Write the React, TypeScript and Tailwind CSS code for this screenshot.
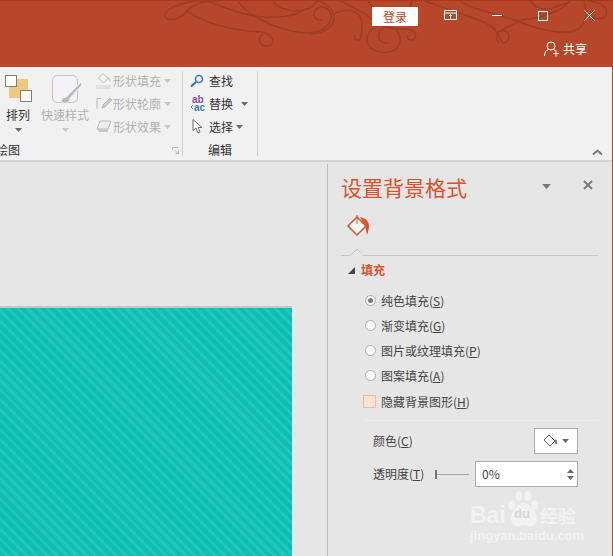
import React from "react";

function Caret({ className = "", color = "#6a6a6a" }: { className?: string; color?: string }) {
  return (
    <svg width="7" height="4" viewBox="0 0 7 4" className={className}>
      <path d="M0 0h7L3.5 4z" fill={color} />
    </svg>
  );
}

function Ornament() {
  return (
    <svg width="613" height="67" viewBox="0 0 613 67" fill="none" stroke="#9f3d25" strokeWidth="1.5" className="absolute left-0 top-0">
      <path d="M212 0c-22-2-46 6-47 14 1 7 14 6 22-4 6-7 16-10 30-10" />
      <path d="M186 9c16 12 42 20 74 22 12 1 18 12 8 14-8 1-12-8-5-12" />
      <path d="M238 0c8 12 24 22 50 29 22 6 36 2 42-8 5-9-4-18-12-14-7 4-4 13 4 12" />
      <path d="M205 0c12 3 22 8 36 12 20 6 52 6 62-3" />
      <path d="M273 0c4 6 14 10 24 10 8 0 16-4 20-10" />
      <path d="M310 33c14 0 25-8 24-18-1-7-8-14-18-15" />
      <path d="M333 14c8-6 20-6 26 0 6 8 2 18 2 22-2 6-8 2-6-2" />
      <path d="M340 0c14 6 26 12 34 20 8 8 22 8 32 8 8 0 12 6 8 10-4 3-8-1-6-4" />
      <path d="M387 23c-14 0-21 10-20 18 2 8 14 12 22 10 10-2 14-12 9-20-5-7-17-6-19 1-2 6 3 11 9 10" />
      <path d="M368 0c4 8 12 14 20 16 10 3 20-2 24-16" />
      <path d="M425 0c16 6 36 12 56 20 22 8 18 24 23 22 6-2 7-10 1-12-9-2-10 8-6 12" />
      <path d="M460 0c10 8 34 12 52 18 20 8 42 15 58 13 16-2 18-18 14-31" />
      <path d="M570 0c-10 12-34 18-44 18-10 2-24 12-30 14" />
      <path d="M590 0c14 2 18 8 16 14-3 6-12 4-14 0" />
      <path d="M530 0c6 8 16 10 26 6 8-3 12-4 14-6" />
    </svg>
  );
}

function ShapeRow({ label, icon }: { label: string; icon: React.ReactNode }) {
  return (
    <div className="flex h-[23px] items-center">
      <span className="flex w-[19px] justify-center">{icon}</span>
      <span className="text-[12px] text-[#b1b1b1]">{label}</span>
      <Caret className="ml-[3px]" color="#c8c8c8" />
    </div>
  );
}

function Radio({ label, k, checked }: { label: string; k: string; checked?: boolean }) {
  return (
    <div className="flex h-[25px] items-center">
      <span className="flex h-[11px] w-[11px] items-center justify-center rounded-full border border-[#ababab] bg-white">
        {checked && <span className="h-[5px] w-[5px] rounded-full bg-[#7a7a7a]" />}
      </span>
      <span className="ml-[5px] text-[12px] text-[#444]">
        {label}(<span className="underline">{k}</span>)
      </span>
    </div>
  );
}

export default function App() {
  return (
    <div
      className="relative flex h-[556px] w-[613px] flex-col overflow-hidden border-r border-[#b7472a] bg-[#e6e6e6]"
      style={{ fontFamily: '"Noto Sans CJK SC", "Liberation Sans", sans-serif' }}
    >
      {/* title bar */}
      <header className="relative h-[67px] shrink-0 border-t border-[#ab3a1d] bg-[#b7472a]">
        <Ornament />
        <div className="relative flex h-[25px] items-end pl-[372px]">
          <div className="flex h-[19px] w-[46px] items-center justify-center bg-white text-[12px] text-[#b7472a]">登录</div>
          <svg width="14" height="11" viewBox="0 0 14 11" className="mb-[5px] ml-[26px]" fill="none" stroke="#fff">
            <path d="M.5.5h12v9H.5zM.5 3h12M6.5 9V5M5 6l1.500-1.500L8 6" />
          </svg>
          <span className="mb-[10px] ml-[34px] h-px w-[10px] bg-white" />
          <span className="mb-[5px] ml-[36px] h-[10px] w-[10px] border border-white" />
          <svg width="11" height="11" viewBox="0 0 11 11" className="mb-[5px] ml-[36px]" stroke="#fff" fill="none">
            <path d="M.5.5l10 10M10.500.5l-10 10" />
          </svg>
        </div>
        <div className="relative mt-[14px] flex items-center pl-[544px] text-[12px] text-white">
          <svg width="16" height="16" viewBox="0 0 16 16" fill="none" stroke="#fff">
            <circle cx="7" cy="5" r="4" />
            <path d="M.5 15c0-4 2-6 4-6.500M9.500 8.500c1 .4 1.700 1 2 1.500M9 12.500h6M12 9.500v6" />
          </svg>
          <span className="ml-[3px]">共享</span>
        </div>
      </header>

      {/* ribbon */}
      <section className="relative flex h-[95px] shrink-0 border-b-2 border-[#d4d4d4] bg-[#f1f1f1] pt-[4px]">
        {/* drawing group */}
        <div className="flex h-[85px] w-[183px] shrink-0 flex-col border-r border-[#d2d2d2]">
          <div className="flex h-[70px] shrink-0">
            <div className="flex w-[36px] flex-col items-center">
              <svg width="28" height="28" viewBox="0 0 28 28" className="ml-[1px] mt-[4px]">
                <rect x="4" y="4" width="19" height="19" fill="#efc77f" />
                <rect x=".5" y=".5" width="11" height="11" fill="#fff" stroke="#7d7d7d" />
                <rect x="15.500" y="15.500" width="11" height="11" fill="#fff" stroke="#7d7d7d" />
              </svg>
              <span className="mt-[4px] text-[12px] leading-[16px] text-[#333]">排列</span>
              <Caret className="mt-[5px]" />
            </div>
            <div className="flex w-[58px] flex-col items-center">
              <svg width="30" height="30" viewBox="0 0 30 30" className="ml-[3px] mt-[4px]" fill="none">
                <rect x=".5" y=".5" width="25" height="27" rx="5" fill="#f4f2f6" stroke="#c4c4c4" />
                <path d="M29 7L17 19l-3 3-3 1c-2 .5-2 4 0 5 3 1 7-1 7-4l1-2L30 10z" fill="#bdbdbd" stroke="#f1f1f1" />
              </svg>
              <span className="mt-[2px] text-[12px] leading-[16px] text-[#b1b1b1]">快速样式</span>
              <Caret className="mt-[5px]" color="#c8c8c8" />
            </div>
            <div className="-mt-[2px] flex w-[88px] flex-col">
              <ShapeRow
                label="形状填充"
                icon={
                  <svg width="17" height="16" viewBox="0 0 17 16" fill="none">
                    <path d="M8 .5l5 5-4.500 4.500-5-5z" stroke="#b9b9b9" fill="#f7f7f7" />
                    <path d="M13 5c2 .5 2 2 1.500 3.500" stroke="#b9b9b9" />
                    <rect x="1" y="12" width="15" height="4" fill="#e0e0e0" />
                  </svg>
                }
              />
              <ShapeRow
                label="形状轮廓"
                icon={
                  <svg width="16" height="14" viewBox="0 0 16 14" fill="none" stroke="#b9b9b9">
                    <path d="M5 1.500H1v10" />
                    <path d="M14 1l2 2-7 7-3 1 1-3z" fill="#cfcfcf" />
                  </svg>
                }
              />
              <ShapeRow
                label="形状效果"
                icon={
                  <svg width="16" height="13" viewBox="0 0 16 13">
                    <path d="M4 1h11l-3 8H1z" fill="#ececec" stroke="#bdbdbd" />
                    <path d="M1 9h11v3H3z" fill="#c9c9c9" />
                  </svg>
                }
              />
            </div>
          </div>
          <div className="relative -ml-[4px] flex h-[18px] shrink-0 items-center text-[12px] text-[#333]">
            绘图
            <svg width="7" height="7" viewBox="0 0 7 7" className="absolute right-[3px] top-[6px]" fill="none" stroke="#b5b5b5">
              <path d="M.5 3V.5H6M3 3.500L6 6.500M6.500 3.500v3h-3" />
            </svg>
          </div>
        </div>

        {/* editing group */}
        <div className="flex h-[85px] w-[75px] shrink-0 flex-col border-r border-[#d2d2d2]">
          <div className="-mt-[2px] flex h-[72px] shrink-0 flex-col pl-[7px]">
            <div className="flex h-[23px] items-center text-[12px] text-[#333]">
              <svg width="14" height="14" viewBox="0 0 14 14" fill="none" className="mr-[5px]">
                <circle cx="9" cy="5" r="3.500" stroke="#3f78b5" strokeWidth="1.600" />
                <path d="M6 8l-5 4.500" stroke="#2f6aa8" strokeWidth="2" />
              </svg>
              查找
            </div>
            <div className="flex h-[23px] items-center text-[12px] text-[#333]">
              <svg width="17" height="20" viewBox="0 0 17 20" className="mr-[2px]" style={{ fontFamily: '"Liberation Sans", sans-serif' }}>
                <text x="2" y="9" fontSize="10" fontWeight="700" fill="#8a4fa8">ab</text>
                <text x="4" y="17" fontSize="10" fontWeight="700" fill="#3f78b5">ac</text>
                <path d="M3 11l-2 2 2 2" fill="none" stroke="#3f78b5" />
              </svg>
              替换
              <Caret className="ml-[8px]" />
            </div>
            <div className="flex h-[23px] items-center text-[12px] text-[#333]">
              <svg width="11" height="15" viewBox="0 0 11 15" fill="#fff" stroke="#6d6d6d" className="ml-[2px] mr-[6px]">
                <path d="M1 .5v11l3-2.500 2 5 2-1-2-4.500h4z" />
              </svg>
              选择
              <Caret className="ml-[3px]" />
            </div>
          </div>
          <div className="flex h-[18px] shrink-0 items-center justify-center text-[12px] text-[#333]">编辑</div>
        </div>

        <svg width="11" height="6" viewBox="0 0 11 6" className="absolute bottom-[5px] right-[9px]" fill="none" stroke="#777" strokeWidth="2">
          <path d="M1 5.500l4.500-4 4.500 4" />
        </svg>
      </section>

      {/* body */}
      <main className="flex min-h-0 flex-1">
        <div className="flex w-[327px] shrink-0 flex-col justify-end">
          <div className="h-[250px] w-[292px] border-t-2 border-[#c6c6c6] bg-[repeating-linear-gradient(45deg,#10bfb4_0,#10bfb4_4px,#22c6bb_4px,#22c6bb_7px)]" />
        </div>

        <aside className="relative mt-[2px] flex-1 border-l border-[#bdbdbd] pl-[13px] pr-[14px]">
          <div className="flex h-[47px] items-start pt-[8px]">
            <h1 className="flex-1 text-[21px] leading-[30px] text-[#d9522c]">设置背景格式</h1>
            <Caret className="mr-[32px] mt-[12px] h-[5px] w-[9px]" color="#7a7a7a" />
            <svg width="10" height="10" viewBox="0 0 10 10" className="mr-[5px] mt-[8px]" stroke="#7a7a7a" strokeWidth="2" fill="none">
              <path d="M1 1l8 8M9 1L1 9" />
            </svg>
          </div>

          <div className="flex h-[30px] items-center pl-[5px]">
            <svg width="24" height="24" viewBox="0 0 24 24" fill="none">
              <path d="M11 3l9 9-9 9-9-9z" fill="#fff" stroke="#d9522c" strokeWidth="1.500" />
              <path d="M11 1v9" stroke="#d9522c" />
              <path d="M14 3c5 1 9 4 9 9 0 3-1 6-2 9-1-4-1-6-2-9z" fill="#d9522c" />
            </svg>
          </div>

          <div className="relative mt-[6px] h-[9px] border-b border-[#c8c8c8]">
            <svg width="14" height="8" viewBox="0 0 14 8" className="absolute -bottom-px left-[9px]" fill="#e6e6e6" stroke="#c8c8c8">
              <path d="M0 8l7-7 7 7" />
            </svg>
          </div>

          <div className="flex h-[28px] items-center pl-[7px]">
            <svg width="7" height="7" viewBox="0 0 7 7" className="mr-[6px]">
              <path d="M7 0v7H0z" fill="#444" />
            </svg>
            <span className="text-[12px] font-bold text-[#d9522c]">填充</span>
          </div>

          <div className="pl-[24px] pt-[4px]">
            <Radio label="纯色填充" k="S" checked />
            <Radio label="渐变填充" k="G" />
            <Radio label="图片或纹理填充" k="P" />
            <Radio label="图案填充" k="A" />
          </div>

          <div className="ml-[22px] mt-[1px] flex h-[25px] items-center">
            <span className="h-[13px] w-[13px] border border-[#f2b9a4] bg-[#fde0d6]" />
            <span className="ml-[5px] text-[12px] text-[#444]">
              隐藏背景图形(<span className="underline">H</span>)
            </span>
          </div>

          <div className="ml-[22px] mt-[6px] border-t border-[#ececec] pl-[10px]">
            <div className="mt-[7px] flex h-[26px] w-[205px] items-center justify-between">
              <span className="text-[12px] text-[#444]">
                颜色(<span className="underline">C</span>)
              </span>
              <div className="flex h-[26px] w-[44px] items-center justify-center border border-[#ababab] bg-white">
                <svg width="15" height="14" viewBox="0 0 15 14" fill="none">
                  <path d="M6 1l6 6-5 5-6-6z" fill="#fff" stroke="#666" />
                  <path d="M12 6c2 0 2 2 1 4l-1-3z" fill="#3f78b5" stroke="#3f78b5" />
                </svg>
                <Caret className="ml-[4px]" />
              </div>
            </div>
            <div className="mt-[7px] flex h-[26px] w-[205px] items-center">
              <span className="shrink-0 whitespace-nowrap text-[12px] text-[#444]">
                透明度(<span className="underline">T</span>)
              </span>
              <div className="ml-[11px] flex min-w-0 flex-1 items-center">
                <span className="h-[9px] w-[2px] bg-[#777]" />
                <span className="h-px flex-1 bg-[#a5a5a5]" />
              </div>
              <div className="ml-[6px] flex h-[26px] w-[103px] shrink-0 items-center justify-between border border-[#ababab] bg-white pl-[6px] pr-[3px]">
                <span className="text-[12px] text-[#444]">0%</span>
                <span className="flex flex-col gap-[3px]">
                  <svg width="7" height="4" viewBox="0 0 7 4">
                    <path d="M0 4h7L3.500 0z" fill="#6a6a6a" />
                  </svg>
                  <Caret />
                </span>
              </div>
            </div>
          </div>
        </aside>
      </main>

      {/* watermark */}
      <div className="pointer-events-none absolute left-[470px] top-[490px] flex w-[112px] flex-col text-white opacity-50">
        <div className="flex h-[37px] items-end" style={{ fontFamily: '"Liberation Sans", sans-serif' }}>
          <span className="w-[37px] text-[23px] font-bold leading-[24px]">Bai</span>
          <span className="relative h-[37px] w-[33px]">
            <svg width="33" height="37" viewBox="0 0 33 37" fill="#fff">
              <ellipse cx="5" cy="15" rx="3.500" ry="5" />
              <ellipse cx="12" cy="6" rx="3.500" ry="5" />
              <ellipse cx="21" cy="6" rx="3.500" ry="5" />
              <ellipse cx="28" cy="15" rx="3.500" ry="5" />
              <path d="M17 13c5 0 13 8 13 15 0 9-7 9-13 7-6 2-13 2-13-7 0-7 8-15 13-15z" />
            </svg>
            <span className="absolute bottom-[6px] left-[7px] text-[13px] font-bold leading-[14px] text-[#c8c8c8]">du</span>
          </span>
          <span className="text-[18px] font-bold leading-[24px]" style={{ fontFamily: '"Noto Sans CJK SC", sans-serif' }}>经验</span>
        </div>
        <span className="mt-[1px] text-[13px] font-bold leading-[16px]" style={{ fontFamily: '"Liberation Sans", sans-serif' }}>jingyan.baidu.com</span>
      </div>
    </div>
  );
}
